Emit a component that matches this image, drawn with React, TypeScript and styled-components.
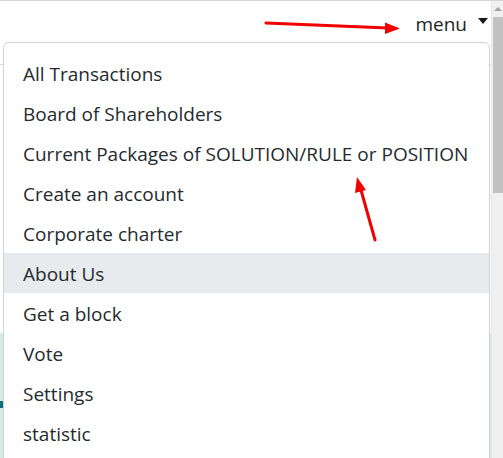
import React from "react";
import styled, { createGlobalStyle } from "styled-components";

const GlobalStyle = createGlobalStyle`
  html, body {
    margin: 0;
    padding: 0;
    overflow: hidden;
    background: #ffffff;
  }
  body {
    font-family: "Open Sans", "Noto Sans", "Liberation Sans", sans-serif;
    color: #212529;
  }
  * { box-sizing: border-box; }
`;

const Frame = styled.div`
  display: flex;
  width: 503px;
  height: 458px;
  border-top: 1px solid #d4d4d4;
`;

const Main = styled.div`
  position: relative;
  flex: 1;
  display: flex;
  flex-direction: column;
  overflow: hidden;
`;

const Header = styled.header`
  height: 64px;
  flex-shrink: 0;
  display: flex;
  justify-content: flex-end;
  align-items: flex-start;
  padding: 10px 3px 0 0;
  border-bottom: 1px solid #dcdcdc;
`;

const Toggle = styled.button`
  display: flex;
  align-items: center;
  gap: 11px;
  border: 0;
  background: transparent;
  padding: 0;
  font: inherit;
  font-size: 19px;
  line-height: 26px;
  color: #212529;
  cursor: pointer;
`;

const Caret = styled.span`
  width: 0;
  height: 0;
  border-top: 6px solid #1a1a1a;
  border-left: 5.5px solid transparent;
  border-right: 5.5px solid transparent;
  margin-top: -6px;
`;

const Content = styled.section`
  margin-top: 268px;
  flex: 1;
  background: #d6ebe5;
  position: relative;
`;

const Marker = styled.span`
  display: block;
  margin-top: 68px;
  width: 3px;
  height: 7px;
  background: #0f6f7a;
`;

const Menu = styled.ul`
  position: absolute;
  top: 41px;
  left: 3px;
  right: 1px;
  margin: 0;
  padding: 10px 0;
  list-style: none;
  background: #ffffff;
  border: 1px solid #d2d2d2;
  border-radius: 6px;
  z-index: 2;
`;

const Item = styled.li<{ $active?: boolean }>`
  height: 40px;
  line-height: 40px;
  padding: 1px 19px 0;
  font-size: 19px;
  white-space: nowrap;
  color: #252a2e;
  background: ${(p) => (p.$active ? "#e8ebee" : "transparent")};
`;

const Arrows = styled.svg`
  position: absolute;
  top: 0;
  left: 0;
  width: 491px;
  height: 457px;
  pointer-events: none;
  z-index: 3;
`;

const Scrollbar = styled.div`
  width: 12px;
  flex-shrink: 0;
  background: #f0f0f0;
  display: flex;
  flex-direction: column;
  align-items: center;
  border-left: 1px solid #e6e6e6;
`;

const ScrollButton = styled.div`
  height: 16px;
  width: 100%;
  display: flex;
  align-items: center;
  justify-content: center;
`;

const UpTriangle = styled.span`
  width: 0;
  height: 0;
  border-bottom: 4px solid #a3a3a3;
  border-left: 4px solid transparent;
  border-right: 4px solid transparent;
`;

const Thumb = styled.div`
  width: 10px;
  height: 176px;
  background: #c1c1c1;
`;

const items = [
  "All Transactions",
  "Board of Shareholders",
  "Current Packages of SOLUTION/RULE or POSITION",
  "Create an account",
  "Corporate charter",
  "About Us",
  "Get a block",
  "Vote",
  "Settings",
  "statistic",
];

export default function App() {
  return (
    <>
      <GlobalStyle />
      <Frame>
        <Main>
          <Header>
            <Toggle>
              menu
              <Caret />
            </Toggle>
          </Header>
          <Content>
            <Marker />
          </Content>
          <Menu>
            {items.map((t) => (
              <Item key={t} $active={t === "About Us"}>
                {t}
              </Item>
            ))}
          </Menu>
          <Arrows viewBox="0 0 491 457">
            <line x1="266" y1="22" x2="388" y2="27" stroke="#f20000" strokeWidth="3" strokeLinecap="round" />
            <polygon points="400,27.5 385,21.5 385,33" fill="#f20000" />
            <line x1="375" y1="239" x2="361" y2="189" stroke="#f20000" strokeWidth="3" strokeLinecap="round" />
            <polygon points="357,176 355,192 366,189" fill="#f20000" />
          </Arrows>
        </Main>
        <Scrollbar>
          <ScrollButton>
            <UpTriangle />
          </ScrollButton>
          <Thumb />
        </Scrollbar>
      </Frame>
    </>
  );
}
